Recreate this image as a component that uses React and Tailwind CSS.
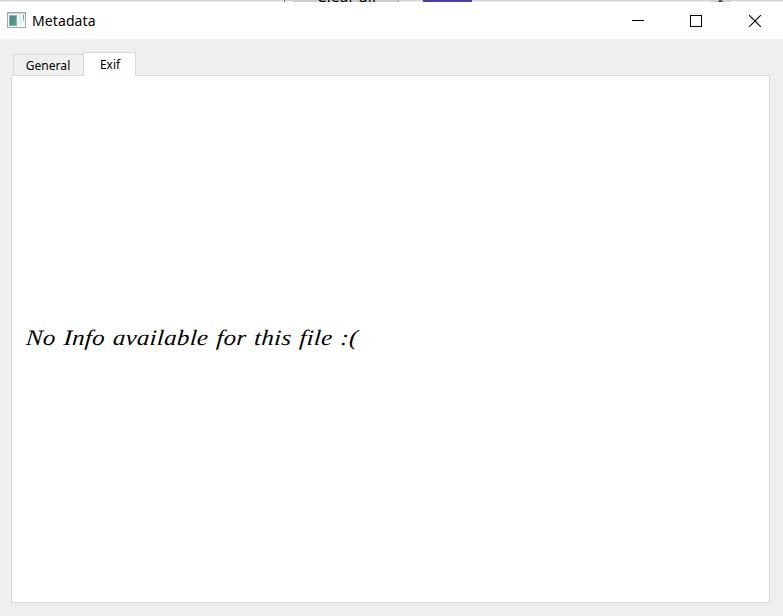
function BackgroundStrip() {
  return (
    <div className="relative h-0.5 w-full shrink-0 overflow-hidden bg-linear-to-b from-[#d6d6d6] from-50% to-[#ededed] to-50%">
      <div className="absolute top-0 left-[284px] h-0.5 w-px bg-[#777777]" />
      <div className="absolute top-0 left-[293px] h-0.5 w-[106px] border-r border-[#a0a0a0] bg-[#cccccc]" />
      <span className="absolute top-[-14px] left-[317px] font-['Noto_Sans',sans-serif] text-[15px] leading-[20px] tracking-[0.3px] whitespace-nowrap text-black">
        Clear all
      </span>
      <div className="absolute top-0 left-[423px] h-0.5 w-[49px] bg-[#4444a0]" />
      <div className="absolute top-0 left-[711px] h-0.5 w-5 bg-[#cfcfcf]" />
      <div className="absolute top-0 left-[719px] h-px w-[3px] bg-[#555555]" />
      <div className="absolute top-px left-[718px] h-px w-[5px] bg-[#555555]" />
    </div>
  );
}

function AppIcon() {
  return (
    <svg width="19" height="16" viewBox="0 0 19 16" shapeRendering="crispEdges" className="relative -top-px shrink-0">
      <defs>
        <linearGradient id="pane" x1="0" y1="0" x2="1" y2="1">
          <stop offset="0" stopColor="#4d7fa0" />
          <stop offset="1" stopColor="#55a878" />
        </linearGradient>
        <linearGradient id="side" x1="0" y1="0" x2="0" y2="1">
          <stop offset="0" stopColor="#4d8f95" />
          <stop offset="1" stopColor="#8cc8a0" />
        </linearGradient>
      </defs>
      <rect x="0.5" y="0.5" width="18" height="15" fill="#f7f8fa" stroke="#a4a8b0" />
      <rect x="1" y="1" width="17" height="1" fill="#c9ccd2" />
      <rect x="2" y="3" width="8" height="11" fill="#7fb5a5" />
      <rect x="3" y="4" width="6" height="9" fill="url(#pane)" />
      <rect x="11" y="3" width="4" height="10" fill="#eceef0" />
      <rect x="16" y="3" width="1" height="6" fill="url(#side)" />
    </svg>
  );
}

function TitleBar() {
  return (
    <header className="flex h-[37px] shrink-0 items-center bg-white pl-[7px]">
      <AppIcon />
      <h1 className="ml-1.5 font-['Noto_Sans',sans-serif] text-[14px] leading-5 font-normal tracking-[0.1px] text-black">
        Metadata
      </h1>
      <div className="ml-auto flex items-center gap-[46px] pr-[22px] text-black">
        <svg width="12" height="12" shapeRendering="crispEdges">
          <rect x="0" y="5" width="12" height="1" fill="currentColor" />
        </svg>
        <svg width="12" height="12" shapeRendering="crispEdges" fill="none" stroke="currentColor">
          <rect x="0.5" y="0.5" width="11" height="11" />
        </svg>
        <svg width="12" height="12" fill="none" stroke="currentColor" strokeWidth="1.1" className="ml-px">
          <path d="M0 0 12 12M12 0 0 12" />
        </svg>
      </div>
    </header>
  );
}

export default function App() {
  return (
    <div className="flex h-screen w-full flex-col overflow-hidden bg-[#efefef]">
      <BackgroundStrip />
      <TitleBar />
      <main className="flex min-h-0 flex-1 flex-col pt-[13px] pr-[13px] pb-[13px] pl-[11px]">
        <div className="z-10 -mb-px flex h-6 shrink-0 items-end pl-0.5 font-['Noto_Sans',sans-serif] text-black">
          <button className="mb-px flex h-[21px] w-[70px] items-center justify-center border border-r-0 border-b-0 border-[#d9d9d9] pt-px pr-px text-[12px] leading-4 tracking-[0.05px]">
            General
          </button>
          <button className="flex h-6 w-[53px] items-center justify-center border border-b-0 border-[#d9d9d9] bg-white pl-px text-[12px] leading-4">
            Exif
          </button>
        </div>
        <section className="flex min-h-0 flex-1 items-center border border-[#d9d9d9] bg-white pl-3.5">
          <p className="origin-left scale-x-[1.13] -skew-x-4 pb-0.5 font-['Liberation_Serif',serif] text-[22px] leading-8 tracking-[0.3px] [word-spacing:1.2px] whitespace-nowrap text-black italic">
            No Info available for this file :(
          </p>
        </section>
      </main>
    </div>
  );
}
